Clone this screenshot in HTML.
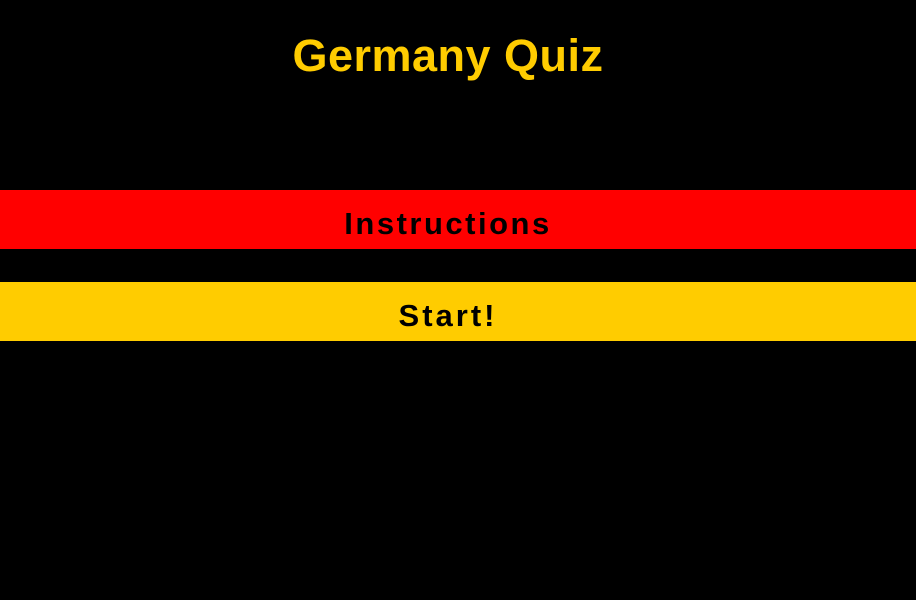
<!DOCTYPE html>
<html><head><style>
html,body{margin:0;padding:0;background:#000;width:916px;height:600px;overflow:hidden;font-family:"Liberation Sans",sans-serif;}
h1{position:absolute;top:28px;left:0;width:896px;padding-right:20px;margin:0;text-align:center;color:#ffcc00;font-size:45px;font-weight:bold;letter-spacing:0.5px;line-height:56px;}
.bar{position:absolute;left:0;width:896px;padding-right:20px;height:59px;line-height:67px;text-align:center;color:#000;font-weight:bold;font-size:31px;letter-spacing:2.5px;overflow:hidden;}
</style></head><body>
<h1>Germany Quiz</h1>
<div class="bar" style="top:190px;background:#ff0000">Instructions</div>
<div class="bar" style="top:282px;background:#ffcc00;letter-spacing:3px">Start!</div>
</body></html>
